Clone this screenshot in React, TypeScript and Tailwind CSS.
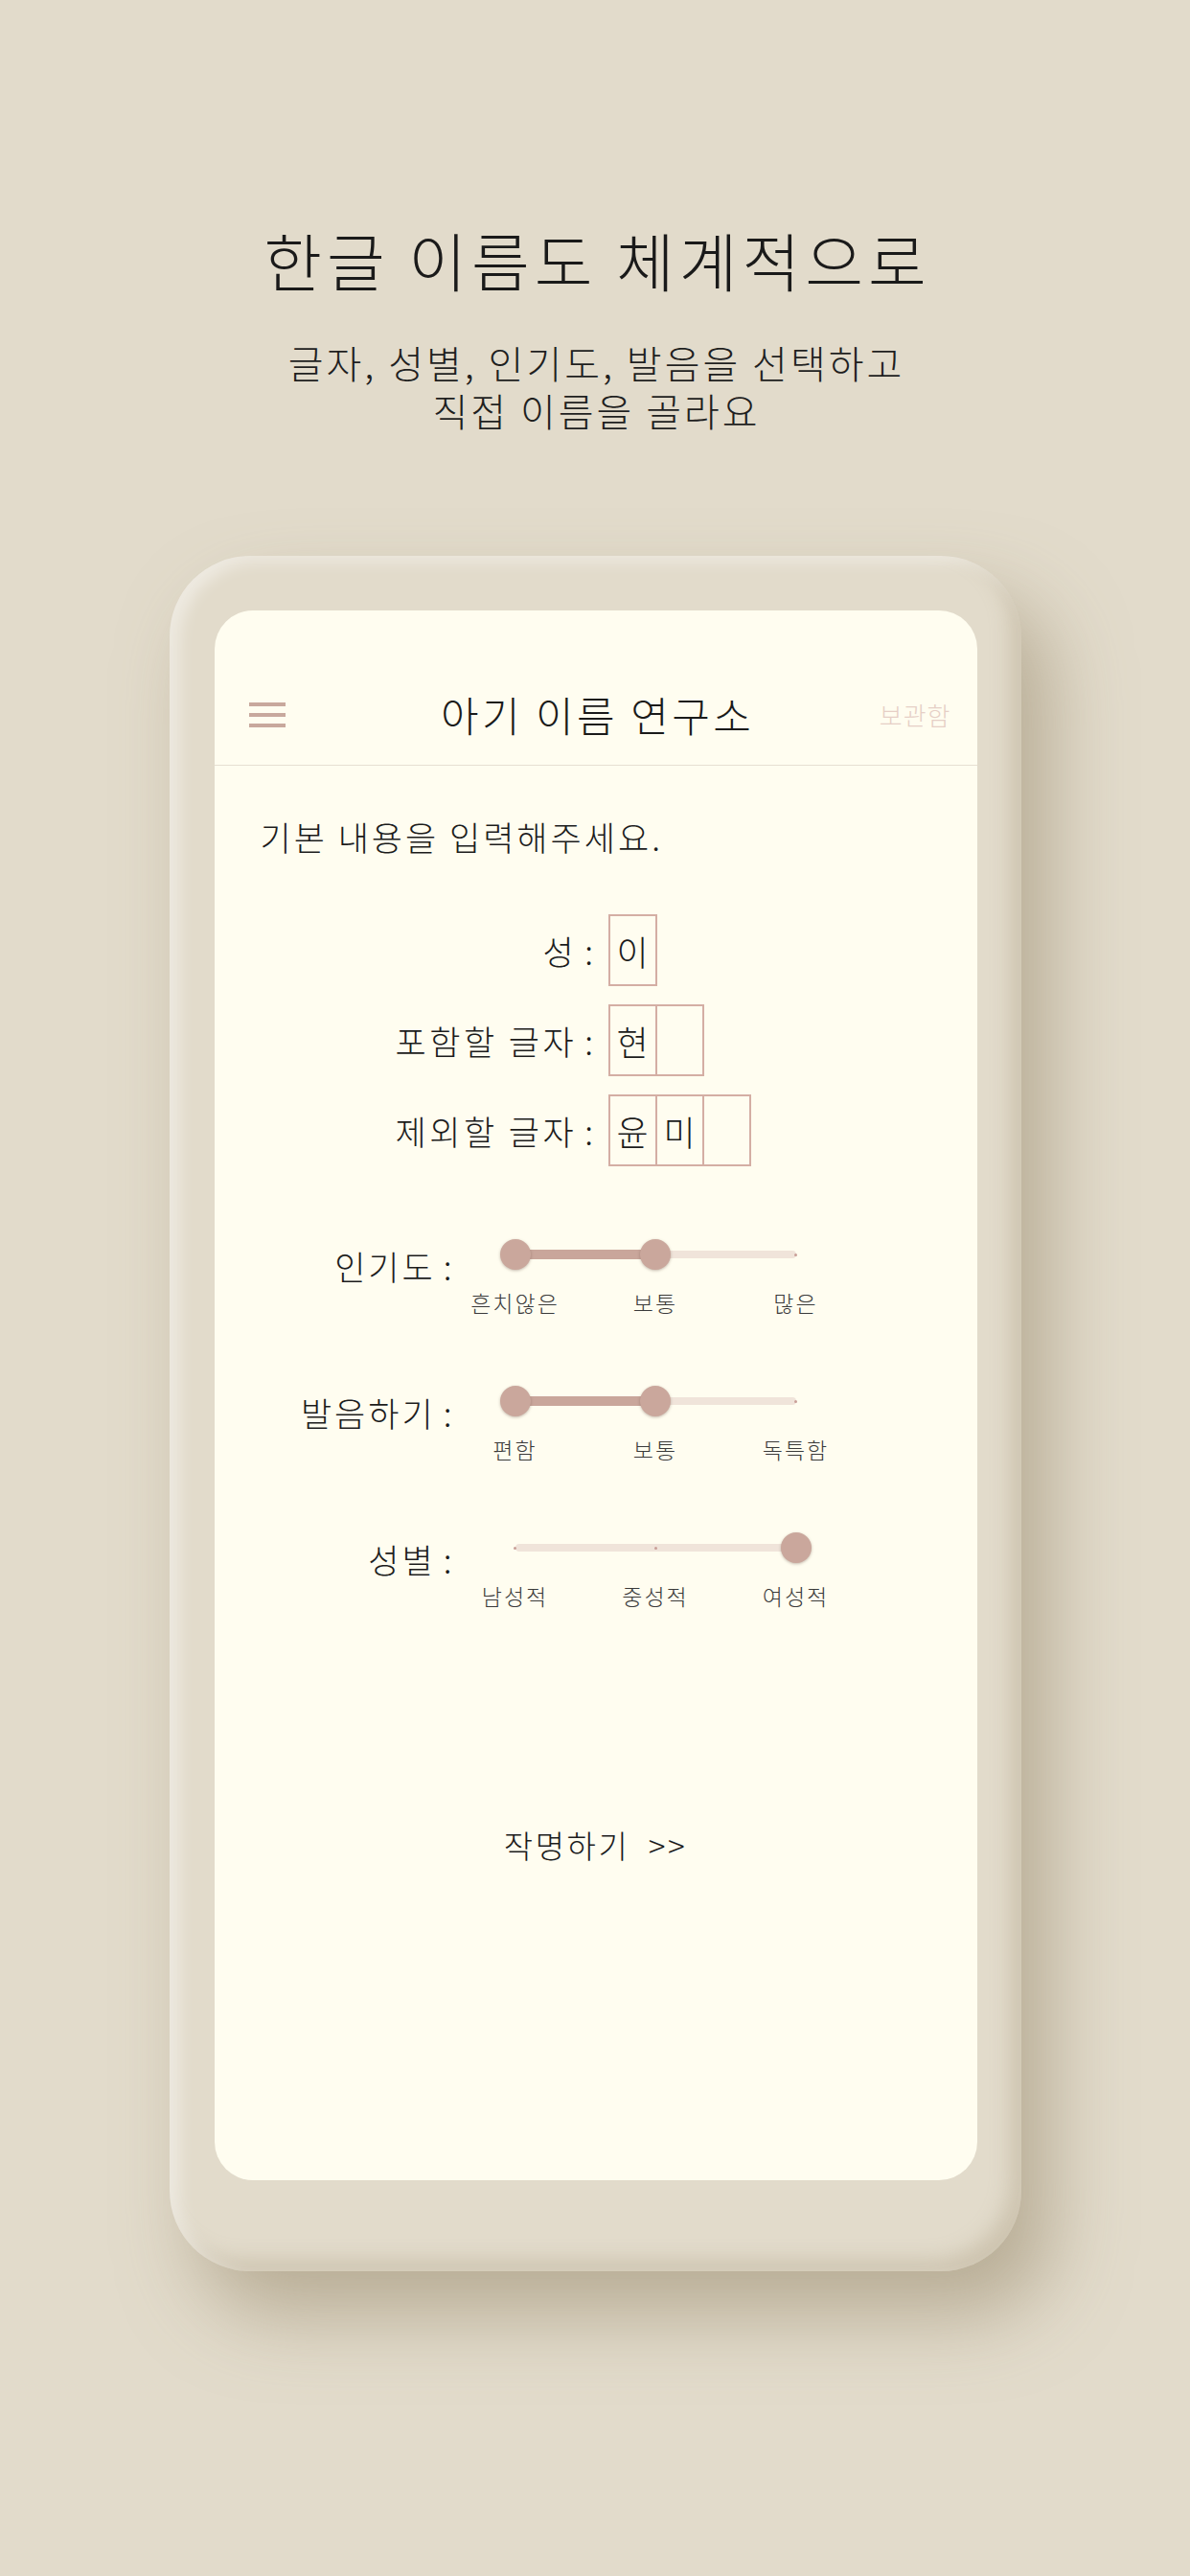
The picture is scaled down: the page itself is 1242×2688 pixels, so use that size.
const font = { fontFamily: '"Noto Sans CJK KR", "Noto Sans", sans-serif' }

function Hamburger() {
  return (
    <div className="flex flex-col gap-[7px] w-[38px]">
      {[0, 1, 2].map((i) => (
        <div key={i} className="h-[4px] w-full bg-[#c8a89d]" />
      ))}
    </div>
  )
}

function CharBoxes({ chars }: { chars: string[] }) {
  return (
    <div className="flex">
      {chars.map((c, i) => (
        <div
          key={i}
          className={`w-[51px] h-[75px] border-2 border-[#d4aea4] flex items-center justify-center text-[36px] leading-none text-[#1c1c1c] ${i > 0 ? '-ml-[2px]' : ''}`}
        >
          {c}
        </div>
      ))}
    </div>
  )
}

function FormRow({ label, chars }: { label: string; chars: string[] }) {
  return (
    <div className="flex items-center gap-[12px]">
      <div className="w-[399px] text-right text-[35px] leading-none tracking-[3.5px] text-[#1c1c1c]">
        {label}
        <span className="ml-[8px]">:</span>
      </div>
      <CharBoxes chars={chars} />
    </div>
  )
}

type SliderProps = {
  label: string
  ticks: string[]
  from: number
  to: number
}

// thumb left edges within the 325px track area
const stops = [0, 146.5, 293]

function SliderRow({ label, ticks, from, to }: SliderProps) {
  const activeLeft = stops[from] + 16
  const activeWidth = stops[to] - stops[from]
  const thumbs = from === to ? [from] : [from, to]
  return (
    <div className="flex items-start">
      <div className="w-[251px] mt-[10px] text-right text-[35px] leading-[36px] tracking-[3px] text-[#1c1c1c] whitespace-nowrap">
        {label}
        <span className="ml-[8px]">:</span>
      </div>
      <div className="w-[413px] ml-[3px] flex flex-col">
        <div className="relative h-[32px] w-[325px] ml-[44px]">
          <div className="absolute left-[16px] right-[16px] top-[12px] h-[8px] rounded-full bg-[#f0e4da]" />
          {[0, 1, 2].map((s) => (
            <div
              key={s}
              className="absolute top-[14.5px] h-[3px] w-[3px] rounded-full bg-[#c99f98]"
              style={{ left: stops[s] + 14.5 }}
            />
          ))}
          {activeWidth > 0 && (
            <div
              className="absolute top-[11px] h-[10px] bg-[#c9a69b]"
              style={{ left: activeLeft, width: activeWidth }}
            />
          )}
          {thumbs.map((t) => (
            <div
              key={t}
              className="absolute top-0 h-[32px] w-[32px] rounded-full bg-[#caa79c] shadow-[0_1px_3px_rgba(90,60,50,0.35)]"
              style={{ left: stops[t] }}
            />
          ))}
        </div>
        <div className="flex justify-between mt-[23px]">
          {ticks.map((t) => (
            <div
              key={t}
              className="w-[120px] text-center text-[23px] leading-[23px] tracking-[2px] whitespace-nowrap text-[#3a3a3a]"
            >
              {t}
            </div>
          ))}
        </div>
      </div>
    </div>
  )
}

export default function App() {
  return (
    <div style={font} className="min-h-[2688px] w-full bg-[#e2dbcb] flex flex-col items-center font-light">
      <h1 className="mt-[237px] pl-[5px] text-[66px] leading-[66px] font-light text-[#1a1a1a] tracking-[5px]">
        한글 이름도 체계적으로
      </h1>
      <div className="mt-[50px] pl-[3px] text-center text-[40px] leading-[50px] tracking-[3px] text-[#1f1f1f]">
        <div>글자, 성별, 인기도, 발음을 선택하고</div>
        <div>직접 이름을 골라요</div>
      </div>

      <div className="mt-[127px] w-[889px] h-[1790px] rounded-[84px] bg-[#e2dbcb] pt-[57px] pl-[47px] pr-[46px] shadow-[30px_45px_80px_rgba(150,135,105,0.55),inset_10px_6px_16px_rgba(255,255,255,0.45),inset_-12px_-12px_20px_rgba(170,155,125,0.35)]">
        <div className="w-[796px] h-[1638px] rounded-[40px] bg-[#fffdf0] flex flex-col overflow-hidden">
          <div className="h-[162px] pt-[56px] border-b-[1.5px] border-[#e6e0d3] flex items-center px-[36px]">
            <Hamburger />
            <div className="flex-1 text-center text-[43px] leading-none tracking-[3.5px] text-[#1a1a1a] pl-[32px]">
              아기 이름 연구소
            </div>
            <div className="text-[26px] leading-none tracking-[1px] text-[#e6cfc6] -mr-[9px]">보관함</div>
          </div>

          <div className="mt-[56px] ml-[48px] text-[35px] leading-[35px] tracking-[3px] text-[#1c1c1c]">
            기본 내용을 입력해주세요.
          </div>

          <div className="mt-[64px] flex flex-col gap-[19px]">
            <FormRow label="성" chars={['이']} />
            <FormRow label="포함할 글자" chars={['현', '']} />
            <FormRow label="제외할 글자" chars={['윤', '미', '']} />
          </div>

          <div className="mt-[76px] flex flex-col gap-[75px]">
            <SliderRow label="인기도" ticks={['흔치않은', '보통', '많은']} from={0} to={1} />
            <SliderRow label="발음하기" ticks={['편함', '보통', '독특함']} from={0} to={1} />
            <SliderRow label="성별" ticks={['남성적', '중성적', '여성적']} from={2} to={2} />
          </div>

          <div className="mt-[232px] text-center text-[33px] leading-[33px] tracking-[2.5px] text-[#1c1c1c]">
            작명하기&nbsp;&nbsp;&gt;&gt;
          </div>
        </div>
      </div>
    </div>
  )
}
